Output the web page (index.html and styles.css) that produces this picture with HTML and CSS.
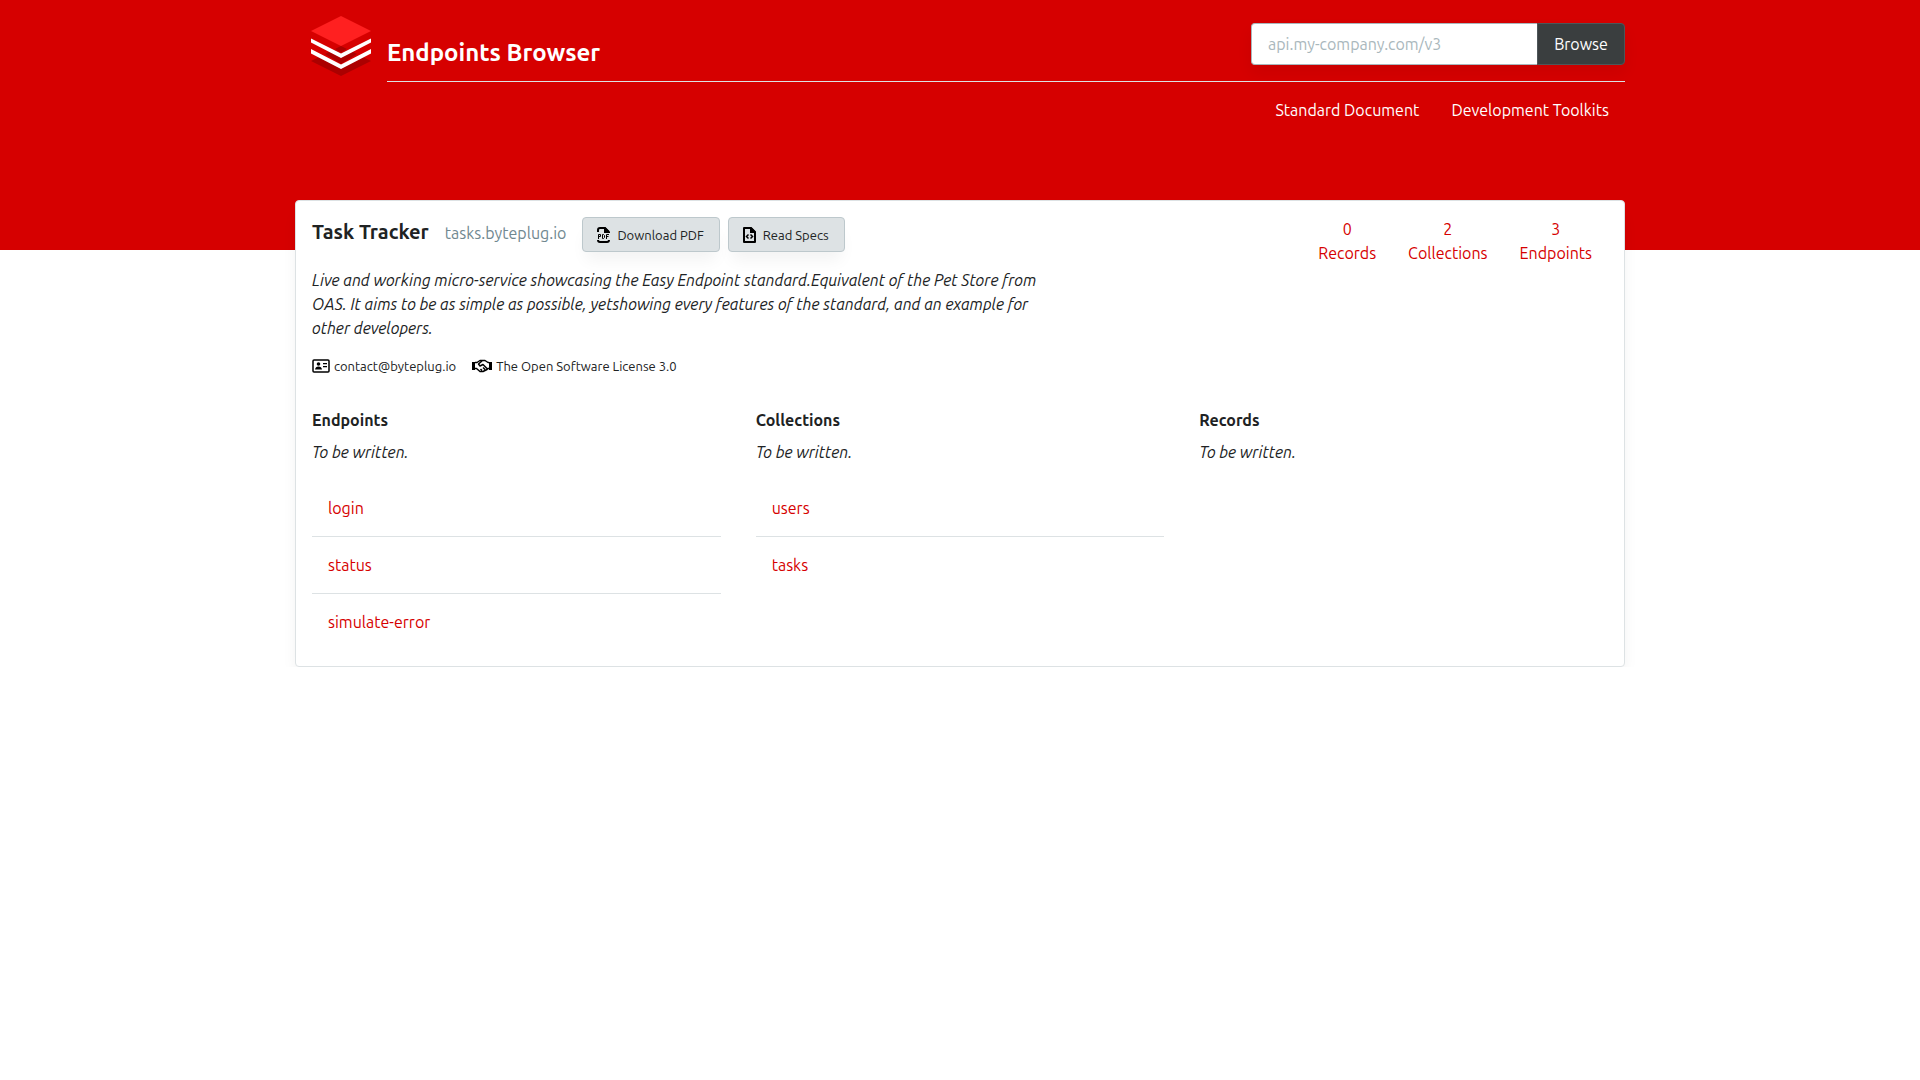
FILE: index.html
```html
<!DOCTYPE html>
<html lang="en">
<head>
<meta charset="utf-8">
<meta name="viewport" content="width=device-width, initial-scale=1">
<title>Endpoints Browser</title>
<link rel="stylesheet" href="styles.css">
</head>
<body>
<header class="site-header">
  <div class="container header-grid">
    <a class="logo" href="#" aria-label="Home">
      <svg viewBox="0 0 60 60" width="60" height="60" aria-hidden="true">
        <path fill="#ab0000" d="M0 45 30 30 60 45 30 60Z"/>
        <path fill="#d60000" d="M0 28 30 43 60 28V36L30 52 0 36Z"/>
        <path fill="#ab0000" d="M14 38 30 30 46 38 30 48Z"/>
        <path fill="#fff" d="M0 33 30 48.500 60 33V37.500L30 53 0 37.500Z"/>
        <path fill="#d60000" d="M0 15 30 0 60 15V23L30 37 0 23Z"/>
        <path fill="#ab0000" d="M24 33 30 30 36 33 30 36.500Z"/>
        <path fill="#fff" d="M0 22.500 30 37.500 60 22.500V26.500L30 42 0 26.500Z"/>
        <path fill="#ff2020" d="M0 15 30 0 60 15 30 30Z"/>
      </svg>
    </a>
    <div class="header-main">
      <div class="header-top">
        <h1 class="site-title">Endpoints Browser</h1>
        <form class="browse">
          <input class="browse-input" type="text" placeholder="api.my-company.com/v3" aria-label="API address">
          <button class="browse-button" type="button">Browse</button>
        </form>
      </div>
      <nav class="nav">
        <a href="#">Standard Document</a>
        <a href="#">Development Toolkits</a>
      </nav>
    </div>
  </div>
</header>
<main class="container card">
  <div class="summary">
    <div class="about">
      <div class="about-head">
        <h2 class="service-name">Task Tracker</h2>
        <span class="service-host">tasks.byteplug.io</span>
        <div class="actions">
          <button class="action" type="button">
            <svg viewBox="0 0 16 18" width="16" height="18" aria-hidden="true">
              <path fill="none" stroke="#000" stroke-width="2" d="M3 6V4Q3 2 5 2H10L14 6M3 14Q3 16 5 16H12Q14 16 14 14"/>
              <path d="M9 1H10L15 6V7H9Z"/>
              <path fill="none" stroke="#000" d="M3.500 13V8.500H5.500V10.500H3.500M7.500 8.500V12.500H8.500L9.500 11.500V9.500L8.500 8.500ZM11.500 13V8.500H14M11.500 10.500H13.500"/>
            </svg>
            Download PDF
          </button>
          <button class="action" type="button">
            <svg viewBox="0 0 16 18" width="16" height="18" aria-hidden="true">
              <path fill="none" stroke="#000" stroke-width="2" stroke-linejoin="round" d="M3 2H10L14 6V16H3Z"/>
              <path d="M9 1H10L15 6V7H9Z"/>
              <path fill="none" stroke="#000" stroke-width="1.500" d="M7.500 8.500 5.500 10.500 7.500 12.500M9.500 8.500 11.500 10.500 9.500 12.500"/>
            </svg>
            Read Specs
          </button>
        </div>
      </div>
      <p class="description">Live and working micro-service showcasing the Easy Endpoint standard.Equivalent of the Pet Store from OAS. It aims to be as simple as possible, yetshowing every features of the standard, and an example for other developers.</p>
      <div class="meta">
        <span class="meta-item">
          <svg viewBox="0 0 18 14" width="18" height="14" aria-hidden="true">
            <rect x="1" y="1" width="16" height="12" rx="1" fill="none" stroke="#000" stroke-width="1.500"/>
            <circle cx="6.500" cy="5" r="1.800"/>
            <path d="M3 10.500Q3.500 7.500 6.500 7.500T10 10.500ZM11 4H15V5.200H11ZM11 7H15V8.200H11Z"/>
          </svg>
          contact@byteplug.io
        </span>
        <span class="meta-item">
          <svg viewBox="0 0 20 14" width="20" height="14" aria-hidden="true">
            <path d="M0 3H3V11H0ZM17 3H20V11H17Z"/>
            <path fill="none" stroke="#000" stroke-width="1.500" stroke-linejoin="round" d="M3 3.500H5L8 1.500H13L16 3.500H17M3 9.500H4.500L8 12.500H11L15 10.500 16 9.500H17M10 2 6.500 5 8 7 11 5.500 15 9.500M8.500 10 10 11.500M11 8.500 13 10.500"/>
          </svg>
          The Open Software License 3.0
        </span>
      </div>
    </div>
    <div class="stats">
      <a href="#records"><span>0</span><span>Records</span></a>
      <a href="#collections"><span>2</span><span>Collections</span></a>
      <a href="#endpoints"><span>3</span><span>Endpoints</span></a>
    </div>
  </div>
  <div class="columns">
    <section id="endpoints">
      <h3>Endpoints</h3>
      <p class="note">To be written.</p>
      <ul class="list">
        <li><a href="#">login</a></li>
        <li><a href="#">status</a></li>
        <li><a href="#">simulate-error</a></li>
      </ul>
    </section>
    <section id="collections">
      <h3>Collections</h3>
      <p class="note">To be written.</p>
      <ul class="list">
        <li><a href="#">users</a></li>
        <li><a href="#">tasks</a></li>
      </ul>
    </section>
    <section id="records">
      <h3>Records</h3>
      <p class="note">To be written.</p>
    </section>
  </div>
</main>
</body>
</html>
```
FILE: styles.css
```css
* { box-sizing: border-box; }
body {
  margin: 0;
  background: #fff;
  color: #202223;
  font: 16px/24px Ubuntu, "Noto Sans", sans-serif;
}
h1, h2, h3, p, ul { margin: 0; padding: 0; }
a { color: #d60000; text-decoration: none; }
button, input { font: inherit; }
svg { display: block; flex: none; }

.container { width: 100%; max-width: 1330px; margin: 0 auto; }
.site-header { min-height: 250px; background: #d60000; }
.header-grid { display: flex; }
.logo { padding: 16px; }
.header-main { flex: 1; }
.header-top {
  display: flex;
  justify-content: space-between;
  align-items: flex-end;
  padding-bottom: 16px;
  min-height: 82px;
  border-bottom: 1px solid #dde2e4;
}
.site-title { font-size: 24px; line-height: 24px; color: #fff; }
.browse { display: flex; width: 374px; height: 42px; border-radius: 4px; box-shadow: 0 8px 16px rgba(0, 0, 0, .06); }
.browse-input {
  flex: 1;
  min-width: 0;
  padding: 0 16px;
  border: 1px solid #a9b7bc;
  border-right: 0;
  border-radius: 4px 0 0 4px;
  background: #fff;
}
.browse-input::placeholder { color: #a9b7bc; opacity: 1; }
.browse-button {
  width: 88px;
  padding: 0;
  border: 1px solid #4d5659;
  border-radius: 0 4px 4px 0;
  background: #3a3e3f;
  color: #fff;
}
.nav { display: flex; justify-content: flex-end; gap: 32px; padding: 16px; }
.nav a { color: #fff; }

.card {
  margin-top: -50px;
  padding: 16px;
  border: 1px solid #dde2e4;
  border-radius: 4px;
  background: #fff;
  box-shadow: 0 12px 16px -4px rgba(0, 0, 0, .08);
}
.summary { display: flex; justify-content: space-between; }
.about { width: 736px; }
.about-head { display: flex; gap: 16px; height: 35px; white-space: nowrap; }
.service-name { font-size: 20px; line-height: 30px; }
.service-host { line-height: 32px; color: #708890; }
.actions { display: flex; gap: 8px; }
.action {
  display: flex;
  align-items: center;
  gap: 6px;
  padding: 0 15px 0 12px;
  border: 1px solid #bdc8cc;
  border-radius: 4px;
  background: #dde2e4;
  color: #202223;
  font-size: 13px;
  box-shadow: 0 12px 16px -4px rgba(0, 0, 0, .05);
}
.description { margin-top: 16px; font-style: italic; }
.meta { display: flex; gap: 16px; margin-top: 16px; font-size: 13px; line-height: 20px; }
.meta-item { display: flex; align-items: center; gap: 4px; }
.stats { display: flex; gap: 32px; padding: 0 16px; }
.stats a { display: flex; flex-direction: column; align-items: center; }

.columns { display: grid; grid-template-columns: repeat(3, 1fr); gap: 35px; margin-top: 32px; }
h3 { font-size: 16px; line-height: 24px; }
.note { margin-top: 8px; font-style: italic; }
.list { margin-top: 16px; list-style: none; }
.list li { padding: 16px; }
.list li + li { border-top: 1px solid #dde2e4; }
```
